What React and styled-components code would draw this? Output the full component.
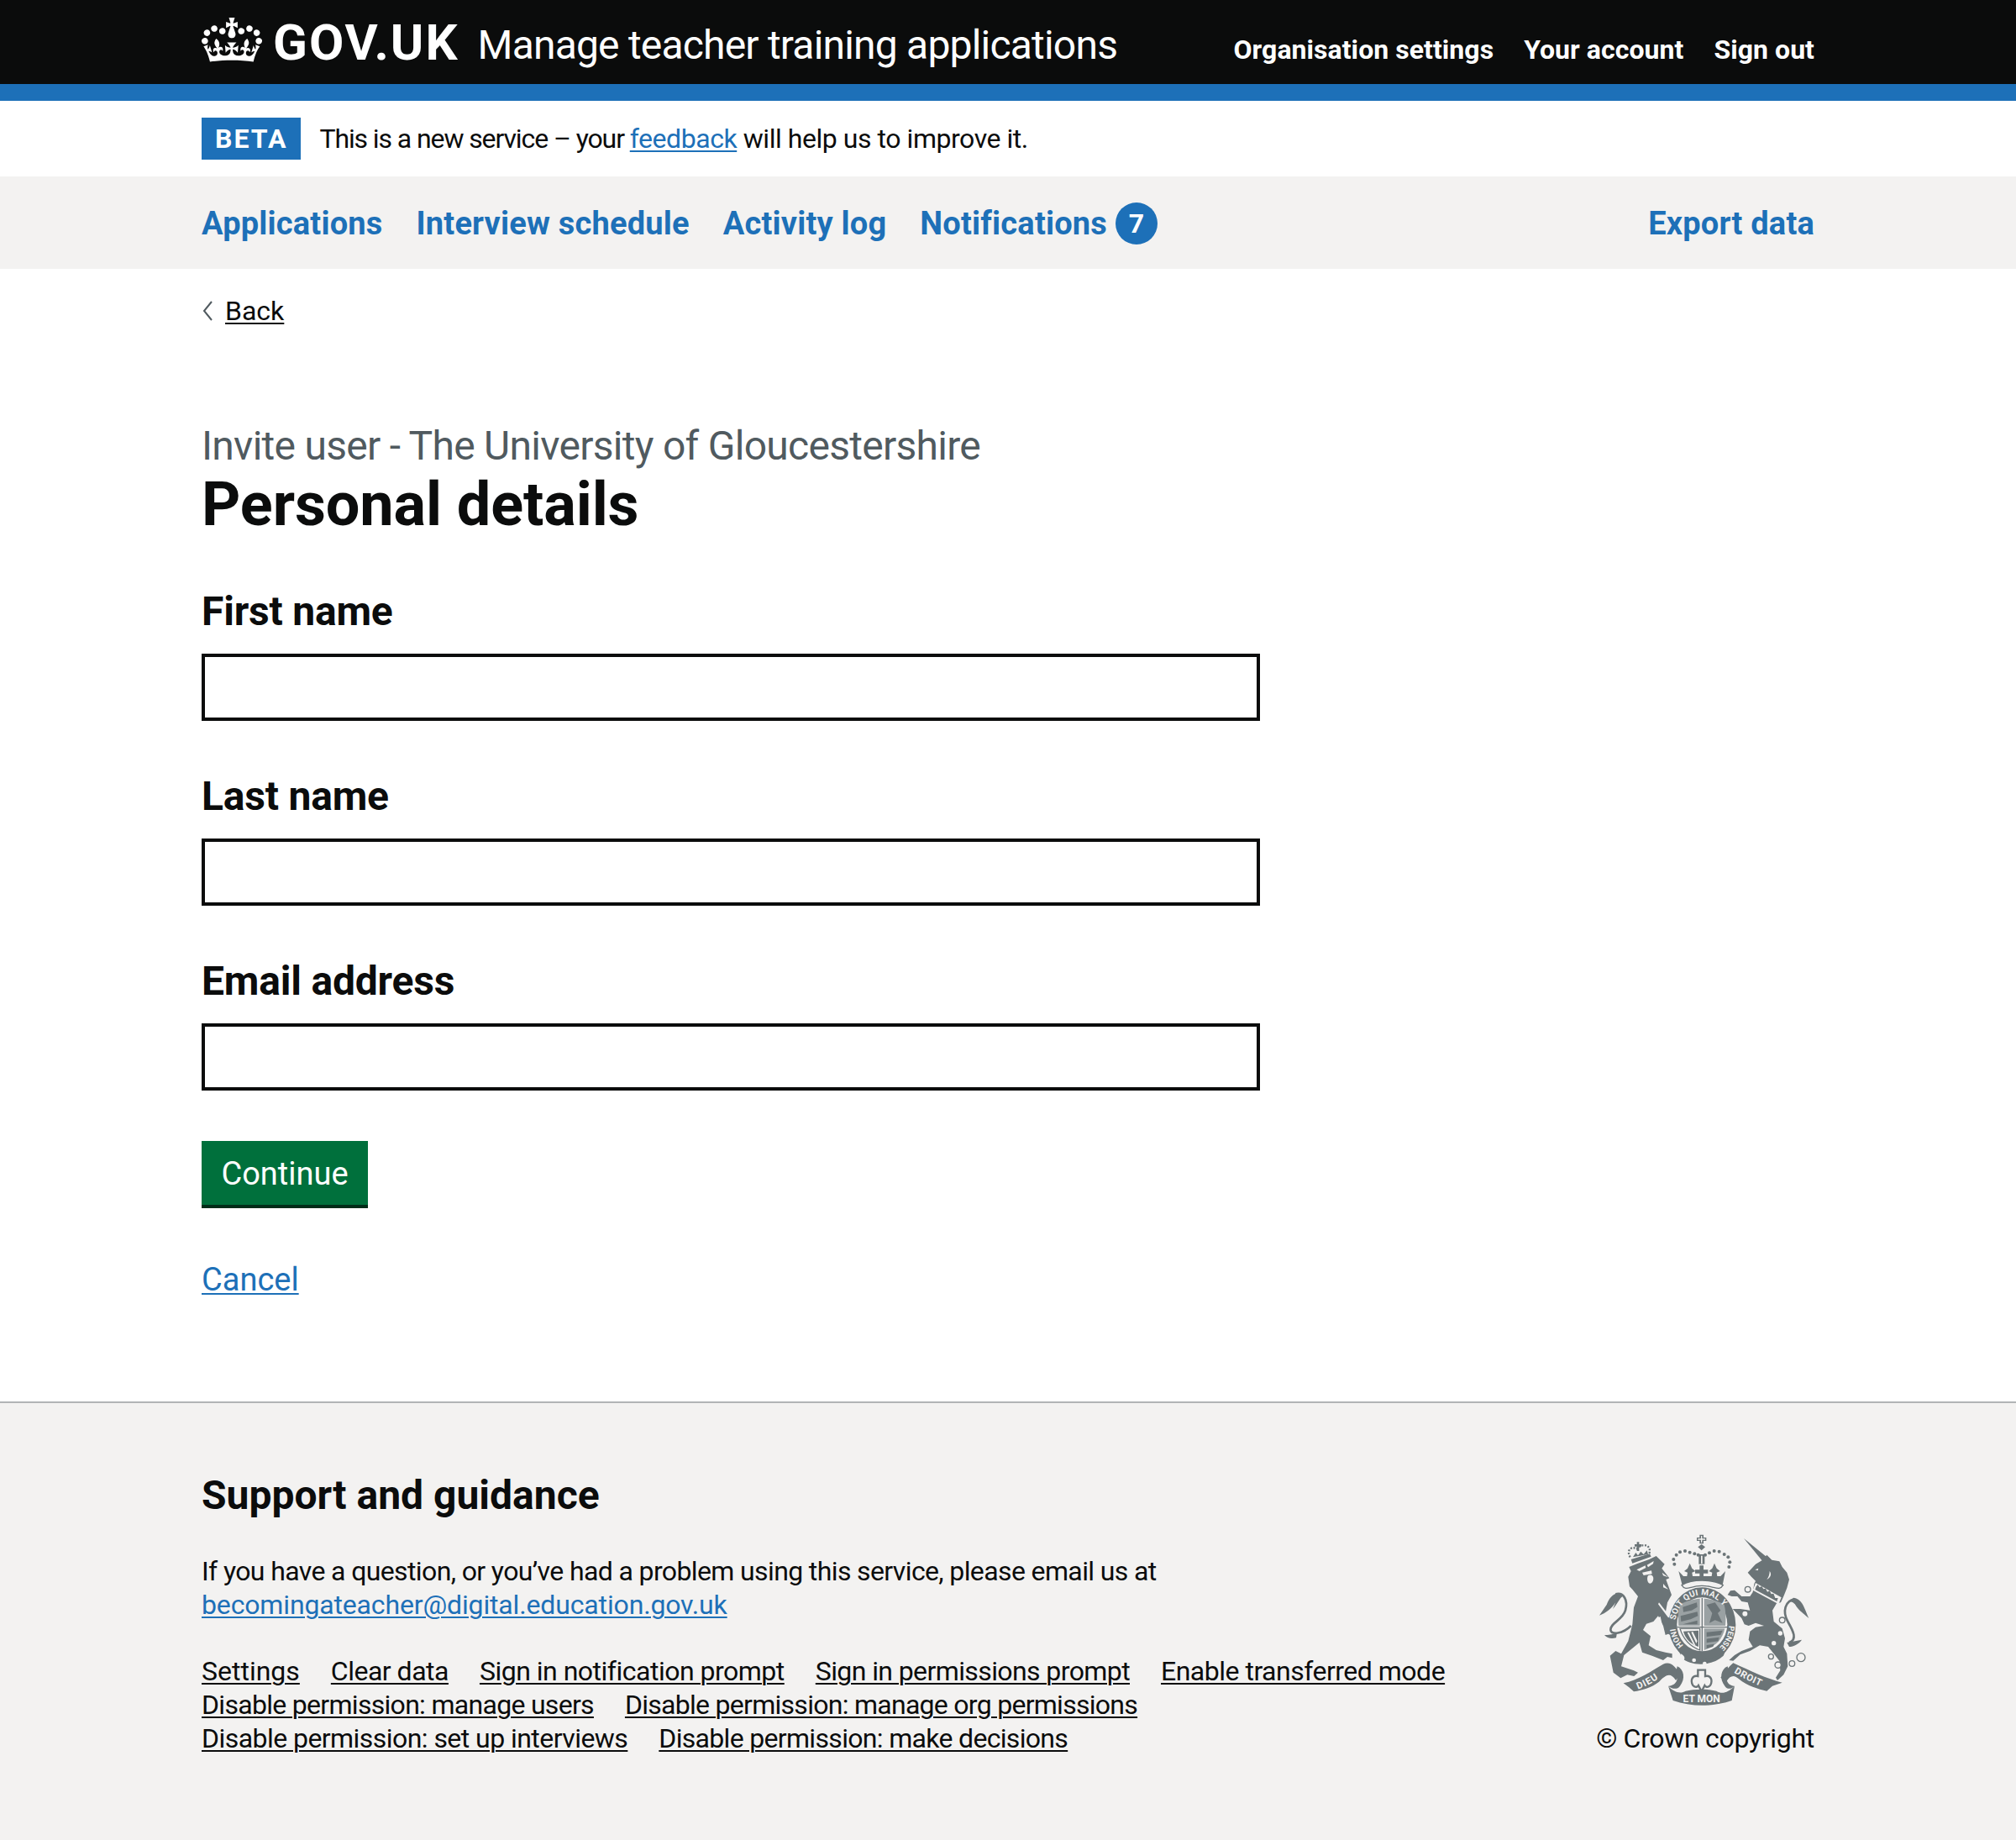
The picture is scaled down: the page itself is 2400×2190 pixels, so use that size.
import React from 'react';
import styled, { createGlobalStyle } from 'styled-components';

const GlobalStyle = createGlobalStyle`
  html, body {
    margin: 0;
    padding: 0;
    background: #fff;
    color: #0b0c0c;
    font-family: Roboto, Arial, sans-serif;
  }
`;

const Width = styled.div`
  width: 1920px;
  margin: 0 auto;
`;

const Header = styled.header`
  background: #0b0c0c;
  height: 100px;
  border-bottom: 20px solid #1d70b8;
`;

const HeaderInner = styled(Width)`
  display: flex;
  align-items: center;
  height: 100px;
`;

const Logo = styled.a`
  display: flex;
  align-items: center;
  color: #fff;
  font-weight: 700;
  font-size: 60px;
  line-height: 100px;
  letter-spacing: 2px;
  margin-top: 2px;
`;

const CrownIcon = styled.svg`
  width: 72px;
  height: 53px;
  margin-right: 13px;
  margin-top: -8px;
`;

const ServiceName = styled.span`
  color: #fff;
  font-size: 48px;
  margin-left: 22px;
  margin-top: 6px;
  letter-spacing: -0.8px;
`;

const HeaderLinks = styled.nav`
  margin-left: auto;
  display: flex;
  gap: 36px;
  padding-top: 18px;
`;

const HeaderLink = styled.a`
  color: #fff;
  font-size: 32px;
  font-weight: 700;
  letter-spacing: 0.05px;
`;

const Banner = styled(Width)`
  display: flex;
  align-items: center;
  height: 90px;
`;

const BetaTag = styled.strong`
  background: #1d70b8;
  color: #fff;
  font-size: 32px;
  line-height: 50px;
  height: 50px;
  padding: 0 16px;
  letter-spacing: 2px;
  margin-right: 22px;
`;

const BannerText = styled.span`
  font-size: 32px;
  letter-spacing: -0.45px;
`;

const BannerLead = styled.span`
  letter-spacing: -1.1px;
`;

const TextLink = styled.a`
  color: #1d70b8;
  text-decoration: underline;
  text-decoration-thickness: 2px;
  text-underline-offset: 3px;
`;

const EmailLink = styled(TextLink)`
  letter-spacing: -0.15px;
`;

const NavBar = styled.div`
  background: #f3f2f1;
  height: 110px;
`;

const NavInner = styled(Width)`
  display: flex;
  align-items: center;
  height: 110px;
  gap: 40px;
  padding-top: 2px;
  box-sizing: border-box;
`;

const NavLink = styled.a`
  color: #1d70b8;
  font-size: 38px;
  font-weight: 700;
  letter-spacing: 0.2px;
  display: flex;
  align-items: center;
  margin-left: ${p => (p.$push ? 'auto' : '0')};
`;

const Badge = styled.span`
  width: 50px;
  height: 50px;
  border-radius: 50%;
  background: #1d70b8;
  color: #fff;
  font-size: 32px;
  line-height: 50px;
  text-align: center;
  margin-left: 10px;
`;

const BackRow = styled.div`
  display: flex;
  align-items: center;
  margin-top: 30px;
  height: 40px;
  font-size: 32px;
`;

const Chevron = styled.svg`
  width: 14px;
  height: 26px;
  margin-right: 14px;
`;

const PlainLink = styled.a`
  color: #0b0c0c;
  text-decoration: underline;
  text-decoration-thickness: 2px;
  text-underline-offset: 3px;
  letter-spacing: ${p => p.$tracking || 'inherit'};
`;

const Main = styled(Width)`
  padding-top: 111px;
  height: 1278px;
  box-sizing: border-box;
`;

const Caption = styled.div`
  color: #505a5f;
  font-size: 48px;
  line-height: 60px;
  letter-spacing: -0.72px;
`;

const Title = styled.h1`
  margin: 0 0 57px;
  font-size: 72px;
  line-height: 80px;
  font-weight: 700;
  letter-spacing: -0.1px;
`;

const Field = styled.div`
  margin-bottom: 60px;
`;

const Label = styled.label`
  display: block;
  font-size: 48px;
  line-height: 60px;
  font-weight: 700;
  letter-spacing: -0.2px;
  margin-bottom: 20px;
`;

const Input = styled.input`
  display: block;
  box-sizing: border-box;
  width: 1260px;
  height: 80px;
  border: 4px solid #0b0c0c;
  border-radius: 0;
  background: #fff;
  outline: 0;
`;

const Button = styled.button`
  display: block;
  height: 76px;
  width: 198px;
  padding: 2px 0 0;
  border: 0;
  border-radius: 0;
  background: #00703c;
  box-shadow: 0 4px 0 #002d18;
  color: #fff;
  font-family: inherit;
  font-size: 38px;
`;

const CancelRow = styled.div`
  margin-top: 64px;
  font-size: 38px;
  line-height: 50px;
`;

const Footer = styled.footer`
  background: #f3f2f1;
  border-top: 2px solid #b1b4b6;
  height: 522px;
  box-sizing: border-box;
  padding-top: 80px;
`;

const FooterInner = styled(Width)`
  display: flex;
  justify-content: space-between;
`;

const FooterMain = styled.div`
  width: 1500px;
`;

const FooterHeading = styled.h2`
  margin: 0 0 40px;
  font-size: 48px;
  line-height: 60px;
  font-weight: 700;
`;

const FooterText = styled.p`
  margin: 0 0 39px;
  font-size: 32px;
  line-height: 40px;
  letter-spacing: -0.62px;
`;

const FooterLinks = styled.div`
  display: flex;
  flex-wrap: wrap;
  column-gap: 37px;
  font-size: 32px;
  line-height: 40px;
  letter-spacing: -0.5px;
`;

const FooterSide = styled.div`
  display: flex;
  flex-direction: column;
  align-items: flex-end;
  margin-top: 70px;
`;

const ArmsSvg = styled.svg`
  display: block;
  width: 260px;
  height: 210px;
  color: #6b7477;
`;

const Copyright = styled.a`
  margin-top: 19px;
  font-size: 32px;
  line-height: 40px;
  letter-spacing: -0.3px;
`;

const CROWN =
  'M25 30.2c3.5 1.5 7.7-.2 9.1-3.7 1.5-3.6-.2-7.8-3.9-9.2-3.6-1.4-7.6.3-9.1 3.9-1.4 3.5.3 7.5 3.9 9zM9 39.5c3.6 1.5 7.8-.2 9.2-3.7 1.5-3.6-.2-7.8-3.9-9.1-3.6-1.5-7.6.2-9.1 3.8-1.4 3.5.3 7.5 3.8 9zM4.4 57.2c3.5 1.5 7.7-.2 9.1-3.8 1.5-3.6-.2-7.7-3.9-9.1-3.5-1.5-7.6.3-9.1 3.8-1.4 3.5.3 7.6 3.9 9.1zm38.3-21.4c3.5 1.5 7.7-.2 9.1-3.8 1.5-3.6-.2-7.7-3.9-9.1-3.6-1.5-7.6.3-9.1 3.8-1.3 3.6.4 7.7 3.9 9.1zm64.4-5.6c-3.6 1.5-7.8-.2-9.1-3.7-1.5-3.6.2-7.8 3.8-9.2 3.6-1.4 7.7.3 9.2 3.9 1.3 3.5-.4 7.5-3.9 9zm15.9 9.3c-3.6 1.5-7.7-.2-9.1-3.7-1.5-3.6.2-7.8 3.7-9.1 3.6-1.5 7.7.2 9.2 3.8 1.5 3.5-.3 7.5-3.8 9zm4.7 17.7c-3.6 1.5-7.8-.2-9.2-3.8-1.5-3.6.2-7.7 3.9-9.1 3.6-1.5 7.7.3 9.2 3.8 1.3 3.5-.4 7.6-3.9 9.1zM89.3 35.8c-3.6 1.5-7.8-.2-9.2-3.8-1.4-3.6.2-7.7 3.9-9.1 3.6-1.5 7.7.3 9.2 3.8 1.4 3.6-.3 7.7-3.9 9.1zM69.7 17.7l8.9 4.7V9.3l-8.9 2.8c-.2-.3-.5-.6-.9-.9L72.4 0H59.6l3.5 11.2c-.3.3-.6.5-.9.9l-8.8-2.8v13.1l8.8-4.7c.3.3.6.7.9.9l-5 15.4v.1c-.2.8-.4 1.6-.4 2.4 0 4.1 3.1 7.5 7 8.1h.2c.3 0 .7.1 1 .1.4 0 .7 0 1-.1h.2c4-.6 7.1-4.1 7.1-8.1 0-.8-.1-1.7-.4-2.4V34l-5.1-15.4c.4-.2.7-.6 1-.9zM66 92.8c16.9 0 32.8 1.1 47.1 3.2 4-16.9 8.9-26.7 14-33.5l-9.6-3.4c1 4.9 1.1 7.2 0 10.2-1.5-1.4-3-4.3-4.2-8.7L108.6 76c2.8-2 5-3.2 7.5-3.3-4.4 9.4-10 11.9-13.6 11.2-4.3-.8-6.3-4.6-5.6-7.9 1-4.7 5.7-5.9 8-.5 4.3-8.7-3-11.4-7.6-8.8 7.1-7.2 7.9-13.5 2.1-21.1-8 6.1-8.1 12.3-4.5 20.8-4.7-5.4-12.1-2.5-9.5 6.2 3.4-5.2 7.9-2 7.2 3.1-.6 4.3-6.4 7.8-13.5 7.2-10.3-.9-10.9-8-11.2-13.8 2.5-.5 7.1 1.8 11 7.3L80.2 60c-4.1 4.4-8 5.3-12.3 5.4 1.4-4.4 8-11.6 8-11.6H55.5s6.4 7.2 7.9 11.6c-4.2-.1-8-1-12.3-5.4l1.4 16.4c3.9-5.5 8.5-7.7 10.9-7.3-.3 5.8-.9 12.8-11.1 13.8-7.2.6-12.9-2.9-13.5-7.2-.7-5 3.8-8.3 7.1-3.1 2.7-8.7-4.6-11.6-9.4-6.2 3.7-8.5 3.6-14.7-4.6-20.8-5.8 7.6-5 13.9 2.2 21.1-4.7-2.6-11.9.1-7.7 8.8 2.3-5.5 7.1-4.2 8.1.5.7 3.3-1.3 7.1-5.7 7.9-3.5.7-9-1.8-13.5-11.2 2.5.1 4.7 1.3 7.5 3.3l-4.7-15.4c-1.2 4.4-2.7 7.2-4.3 8.7-1.1-3-.9-5.3 0-10.2l-9.5 3.4c5 6.9 9.9 16.7 14 33.5 14.8-2.1 30.8-3.2 47.7-3.2z';

const LIGHT = '#f3f2f1';
const MID = '#9aa1a3';

const crownDots = [
  [40, 125], [37, 108], [47, 92], [60, 82], [78, 78], [95, 83], [112, 88], [125, 92],
  [150, 92], [165, 85], [182, 78], [200, 80], [218, 90], [232, 100], [238, 118], [235, 135],
];

const unicornRings = [
  [122, 215, 10], [112, 302, 11], [245, 325, 10], [205, 455, 9], [230, 485, 11], [280, 480, 10], [312, 458, 15],
];

const footerLinks = [
  { text: 'Settings', tracking: '0' },
  { text: 'Clear data' },
  { text: 'Sign in notification prompt' },
  { text: 'Sign in permissions prompt', tracking: '-0.6px' },
  { text: 'Enable transferred mode' },
  { text: 'Disable permission: manage users', tracking: '-0.7px' },
  { text: 'Disable permission: manage org permissions', tracking: '-0.72px' },
  { text: 'Disable permission: set up interviews', tracking: '-0.55px' },
  { text: 'Disable permission: make decisions', tracking: '-0.68px' },
];

const ArmsText = styled.text.attrs(p => ({ fontSize: p.$size, fill: LIGHT }))`
  font-family: Roboto, sans-serif;
  font-weight: 700;
`;

// the royal arms, redrawn by hand from the footer crest (3 units to a pixel)
const RoyalArms = () => (
  <ArmsSvg viewBox="0 0 780 630" aria-hidden="true">
    <g fill="currentColor">
      {/* lion */}
      <path d="M118 135L150 122L190 108L215 96L245 125L235 140L262 175L250 180L270 235L255 262L248 300L262 318L285 345L290 372L272 368L272 382L258 374L248 378L240 345L222 310L205 330L180 338L168 360L195 382L188 415L215 432L248 440L272 445L272 460L255 456L240 468L200 452L165 440L155 405L100 450L90 490L135 505L150 512L136 525L112 520L88 532L62 512L50 452L70 435L90 445L115 400L130 340L135 280L150 240L130 215L120 205L115 170L125 150Z" />
      <path d="M225 262L264 312L258 316L222 268Z" fill={LIGHT} />
      <path d="M145 145L176 130L178 138L155 150ZM182 128L206 114L204 124L186 136ZM165 155L198 148L200 160L170 165Z" fill={LIGHT} />
      <path d="M186 166C195 160 206 165 205 178C204 192 194 197 188 192C182 186 182 172 186 166Z" fill={LIGHT} />
      <path d="M236 155L258 172L240 166ZM240 195L258 215L240 208ZM215 320L230 312L236 340L220 338Z" fill={LIGHT} />
      {/* lion tail */}
      <path d="M70 232C100 225 115 255 105 290C95 325 50 335 52 360C55 378 95 375 125 345" fill="none" stroke="currentColor" strokeWidth="8" />
      <path d="M90 228C60 225 45 250 38 270L12 308C35 300 55 285 70 262L60 285C75 270 85 245 95 240Z" />
      <path d="M30 378C45 378 55 378 75 370L72 388C55 392 40 390 30 378Z" />
      {/* lion crown */}
      <path d="M125 108L192 88L197 98L130 122Z" />
      <path d="M146 46H154V54H162V62H154V78H146V62H138V54H146Z" />
      <path d="M132 100L142 84L150 94L160 80L170 90L182 76L186 90Z" />
      <path d="M122 100C108 75 125 60 146 70C165 48 200 55 190 88" fill="none" stroke="currentColor" strokeWidth="7" strokeDasharray="6 5" />
      {/* shield, garter and crown */}
      <g transform="translate(240 0)">
        <path d="M130 20H144V30H154V42H144V52H130V42H120V30H130Z" />
        <path d="M135 24H139V48H135ZM124 34H150V38H124Z" fill={LIGHT} />
        <path d="M137 54L150 64L137 76L124 64Z" />
        <path d="M127 90H148V125H127Z" />
        <rect x="135" y="95" width="5" height="28" fill={LIGHT} />
        {crownDots.map(([cx, cy]) => (
          <circle key={cx + '-' + cy} cx={cx} cy={cy} r="6" />
        ))}
        <path d="M55 150L72 168H205L222 150L212 200C170 178 105 178 68 200Z" />
        <path d="M95 122L103 140L115 150L103 155L105 168H85L87 155L75 150L87 140Z" />
        <path d="M183 122L191 140L203 150L191 155L193 168H173L175 155L163 150L175 140Z" />
        <path d="M130 130H144V145H160V158H144V168H130V158H114V145H130Z" />
        <ellipse cx="139" cy="342" rx="120" ry="134" />
        <path d="M66 200C105 178 172 178 214 200C205 215 195 212 178 208C150 200 125 200 100 208C85 212 75 215 66 200Z" fill={LIGHT} stroke="currentColor" strokeWidth="4" />
        <ellipse cx="139" cy="340" rx="90" ry="96" fill={LIGHT} />
        <path d="M55 345C52 310 55 280 60 268C85 255 110 250 131 248V345Z" fill={MID} />
        <path d="M146 248C170 250 200 258 218 270C224 295 224 320 222 345H146Z" fill={MID} />
        <path d="M60 355H131V432C100 420 72 395 60 355Z" fill={LIGHT} stroke="currentColor" strokeWidth="4" />
        <path d="M146 355H220C212 395 185 420 146 432Z" fill={MID} />
        <path d="M139 246V436M50 350H228" fill="none" stroke="currentColor" strokeWidth="4" />
        <path d="M70 278L120 262L122 278L102 290L72 296ZM62 310L122 295L124 310L98 322L64 330ZM70 340L122 326V340Z" />
        <path d="M155 270L185 262L205 290L195 300L212 335L185 325L165 335L175 300Z" />
        <path d="M155 368L212 362L205 378L155 384ZM155 392L200 386L196 400L155 406ZM155 414L182 410L178 420L155 426Z" />
        <path d="M72 365L126 362L126 420C100 410 80 395 72 365Z" />
        <path d="M86 370L92 368L116 416L108 412ZM100 368L106 366L122 400L118 408Z" fill={LIGHT} />
        {/* garter strap and buckle */}
        <path d="M55 432C95 475 175 480 225 430L215 452C170 492 100 490 66 460Z" />
        <path d="M62 445C58 452 62 465 72 470C80 462 76 450 62 445Z" fill={LIGHT} />
        <circle cx="110" cy="468" r="7" fill={LIGHT} />
        <circle cx="148" cy="480" r="7" fill={LIGHT} />
        {/* fleur under the shield */}
        <path d="M124 503H150V525C170 520 178 540 168 558C158 568 150 562 148 558L137 580L126 558C124 562 116 568 106 558C96 540 104 520 124 525Z" fill="none" stroke="currentColor" strokeWidth="7" />
        <defs>
          <path id="garter-top" d="M44 325A96 105 0 0 1 234 325" />
          <path id="garter-left" d="M72 415A96 105 0 0 1 43 342" />
          <path id="garter-right" d="M235 345A96 105 0 0 1 190 430" />
        </defs>
      </g>
      {/* unicorn */}
      <g transform="translate(420 0)">
        <path d="M108 33L190 100L175 115Z" />
        <path d="M122 155L150 125L175 110L190 92L208 110L235 115L245 135L262 155L270 180L262 210L250 240L240 262L225 265L210 290L215 330L245 355L255 390L250 420L262 445L265 490L250 520L228 540L222 530L238 505L235 470L215 445L195 420L165 415L130 435L95 448L70 470L55 468L75 450L100 435L140 420L125 395L130 365L150 350L180 345L150 335L125 345L110 340L100 318L68 285L95 285L130 290L122 262L100 258L85 240L65 240L50 235L60 220L75 218L100 240L130 240L140 225L145 195L150 185L135 170Z" />
        <path d="M150 192L242 244L232 268L140 218Z" fill={LIGHT} />
        <path d="M152 205L158 198L164 208L172 204L178 214L186 212L192 224L200 220L206 232L214 230L220 246L230 246L226 258L148 216Z" />
        <path d="M200 150C208 160 205 172 190 180C198 170 200 160 200 150ZM148 145L160 140L158 148Z" fill={LIGHT} />
        <circle cx="238" cy="372" r="8" fill={LIGHT} />
        <circle cx="215" cy="407" r="8" fill={LIGHT} />
        <path d="M270 405C300 395 285 365 265 330C245 295 255 255 290 250" fill="none" stroke="currentColor" strokeWidth="8" />
        <path d="M285 245C315 250 320 270 340 318C320 300 305 290 295 275C290 265 280 258 270 258Z" />
        <path d="M262 405L315 395C305 410 285 420 270 420Z" />
        {unicornRings.map(([cx, cy, r]) => (
          <circle key={cx} cx={cx} cy={cy} r={r} fill={LIGHT} stroke="currentColor" strokeWidth="4" />
        ))}
      </g>
      {/* motto ribbons */}
      <path d="M98 550C150 540 200 505 240 482C265 470 285 490 300 520L285 540C265 510 250 520 225 545C200 565 165 575 135 580L118 565Z" />
      <path d="M665 548C610 535 550 505 490 478C475 490 460 510 445 530L465 545C480 520 495 520 510 535C540 560 580 572 610 578L630 560Z" />
      <path d="M258 560L275 612C340 635 420 635 485 612L495 560C470 585 450 590 430 578C400 570 350 570 320 578C300 590 275 580 258 560Z" />
      <path d="M290 490C315 500 320 535 300 560C290 575 270 570 258 560C275 560 300 545 285 515Z" />
      <path d="M470 490C445 500 440 535 460 560C470 575 485 570 495 560C480 560 455 545 475 515Z" />
    </g>
    <defs>
      <path id="ribbon-left" d="M150 572C185 560 215 540 250 515" />
      <path id="ribbon-right" d="M492 512C530 535 570 555 612 572" />
    </defs>
    <g transform="translate(240 0)">
      <ArmsText $size="30" letterSpacing="1">
        <textPath href="#garter-top">SOIT QUI MAL Y</textPath>
      </ArmsText>
      <ArmsText $size="28">
        <textPath href="#garter-right">PENSE</textPath>
      </ArmsText>
      <ArmsText $size="28">
        <textPath href="#garter-left">HONI</textPath>
      </ArmsText>
      <ArmsText $size="36" x="137" y="617" textAnchor="middle">ET MON</ArmsText>
    </g>
    <ArmsText $size="34" letterSpacing="3">
      <textPath href="#ribbon-left">DIEU</textPath>
    </ArmsText>
    <ArmsText $size="34" letterSpacing="2">
      <textPath href="#ribbon-right">DROIT</textPath>
    </ArmsText>
  </ArmsSvg>
);

const App = () => (
  <>
    <GlobalStyle />
    <Header>
      <HeaderInner>
        <Logo>
          <CrownIcon viewBox="0 0 132 97" aria-hidden="true">
            <path fill="currentColor" fillRule="evenodd" d={CROWN} />
          </CrownIcon>
          GOV.UK
        </Logo>
        <ServiceName>Manage teacher training applications</ServiceName>
        <HeaderLinks>
          <HeaderLink>Organisation settings</HeaderLink>
          <HeaderLink>Your account</HeaderLink>
          <HeaderLink>Sign out</HeaderLink>
        </HeaderLinks>
      </HeaderInner>
    </Header>
    <Banner>
      <BetaTag>BETA</BetaTag>
      <BannerText>
        <BannerLead>This is a new service – your </BannerLead>
        <TextLink>feedback</TextLink> will help us to improve it.
      </BannerText>
    </Banner>
    <NavBar>
      <NavInner>
        <NavLink>Applications</NavLink>
        <NavLink>Interview schedule</NavLink>
        <NavLink>Activity log</NavLink>
        <NavLink>
          Notifications
          <Badge>7</Badge>
        </NavLink>
        <NavLink $push>Export data</NavLink>
      </NavInner>
    </NavBar>
    <Width>
      <BackRow>
        <Chevron viewBox="0 0 14 26" aria-hidden="true">
          <path d="M12 2L3 13l9 11" fill="none" stroke="#505a5f" strokeWidth="2" />
        </Chevron>
        <PlainLink>Back</PlainLink>
      </BackRow>
    </Width>
    <Main>
      <Caption>Invite user - The University of Gloucestershire</Caption>
      <Title>Personal details</Title>
      <Field>
        <Label>First name</Label>
        <Input />
      </Field>
      <Field>
        <Label>Last name</Label>
        <Input />
      </Field>
      <Field>
        <Label>Email address</Label>
        <Input />
      </Field>
      <Button>Continue</Button>
      <CancelRow>
        <TextLink>Cancel</TextLink>
      </CancelRow>
    </Main>
    <Footer>
      <FooterInner>
        <FooterMain>
          <FooterHeading>Support and guidance</FooterHeading>
          <FooterText>
            If you have a question, or you’ve had a problem using this service, please email us at
            <br />
            <EmailLink>becomingateacher@digital.education.gov.uk</EmailLink>
          </FooterText>
          <FooterLinks>
            {footerLinks.map(link => (
              <PlainLink key={link.text} $tracking={link.tracking}>
                {link.text}
              </PlainLink>
            ))}
          </FooterLinks>
        </FooterMain>
        <FooterSide>
          <RoyalArms />
          <Copyright>© Crown copyright</Copyright>
        </FooterSide>
      </FooterInner>
    </Footer>
  </>
);

export default App;
